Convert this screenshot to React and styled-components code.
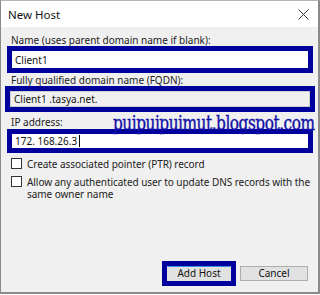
import React from "react";
import styled, { createGlobalStyle } from "styled-components";

const Global = createGlobalStyle`
  html, body { margin: 0; padding: 0; background: #ffffff; }
  body { font-family: "Noto Sans", "Liberation Sans", sans-serif; }
  * { box-sizing: border-box; }
`;

const NAVY = "#00009c";

const Window = styled.div`
  position: relative;
  width: 320px;
  height: 294px;
  display: flex;
  flex-direction: column;
  border-top: 1px solid #b4b4b4;
  border-left: 1px solid #8a8a8a;
  border-right: 2px solid #8a8a8a;
  border-bottom: 2px solid #8a8a8a;
  background: #f0f0f0;
  color: #1a1a1a;
`;

const TitleBar = styled.div`
  height: 26px;
  flex: none;
  display: flex;
  align-items: center;
  justify-content: space-between;
  background: #ffffff;
  padding: 0 9px 0 7px;
  font-size: 11.5px;
  color: #111;
`;

const Close = styled.svg`
  width: 11px;
  height: 11px;
  display: block;
`;

const Content = styled.div`
  flex: 1;
  display: flex;
  flex-direction: column;
  padding: 7px 5px 0 6px;
`;

const Label = styled.div`
  font-size: 10px;
  line-height: 12px;
  height: ${(p) => p.$h || 12}px;
  margin-top: ${(p) => p.$mt || 0}px;
  padding-left: 4px;
  color: #222;
  white-space: nowrap;
`;

const Highlight = styled.div`
  border: 5px solid ${NAVY};
  height: ${(p) => p.$h}px;
  margin: ${(p) => p.$m || "0"};
  display: flex;
`;

const Field = styled.div`
  flex: 1;
  display: flex;
  align-items: center;
  padding-left: 3px;
  font-size: 10px;
  color: #111;
  background: ${(p) => (p.$disabled ? "#f0f0f0" : "#ffffff")};
  border: ${(p) => (p.$disabled ? "1px solid #cfcfcf" : "none")};
  white-space: nowrap;
`;

const Caret = styled.span`
  display: inline-block;
  width: 1px;
  height: 12px;
  background: #000;
  margin-left: 2px;
`;

const Checks = styled.div`
  display: flex;
  flex-direction: column;
  gap: 6px;
  margin-top: 5px;
  padding-left: 4px;
`;

const CheckRow = styled.label`
  display: flex;
  align-items: flex-start;
  gap: 5px;
  font-size: 10px;
  line-height: 12px;
  color: #222;
  white-space: nowrap;
  letter-spacing: -0.05px;
`;

const Box = styled.span`
  flex: none;
  width: 11px;
  height: 11px;
  border: 1px solid #333;
  background: #fff;
`;

const Buttons = styled.div`
  margin-top: auto;
  margin-bottom: 6px;
  display: flex;
  justify-content: flex-end;
  align-items: center;
  gap: 4px;
  padding-right: 5px;
`;

const DefaultRing = styled.div`
  border: 5px solid ${NAVY};
  width: 74px;
  height: 25px;
  display: flex;
`;

const Button = styled.button`
  width: ${(p) => p.$w}px;
  height: 15px;
  padding: 0;
  font-family: inherit;
  font-size: 10px;
  line-height: 13px;
  color: #111;
  background: #e1e1e1;
  border: 1px solid ${(p) => (p.$default ? "#e1e1e1" : "#adadad")};
  border-top-color: ${(p) => (p.$default ? "#3d8fe0" : "#adadad")};
  flex: ${(p) => (p.$default ? 1 : "none")};
`;

const Watermark = styled.div`
  position: absolute;
  left: 112px;
  top: 112px;
  font-family: "DejaVu Serif", "Liberation Serif", serif;
  font-stretch: condensed;
  font-size: 17px;
  line-height: 18px;
  color: #1010a8;
  letter-spacing: -0.45px;
  white-space: nowrap;
  transform: scaleY(1.15);
  transform-origin: 0 0;
  -webkit-text-stroke: 0.3px #1010a8;
`;

export default function App() {
  return (
    <>
      <Global />
      <Window>
        <TitleBar>
          <span>New Host</span>
          <Close viewBox="0 0 11 11">
            <path d="M0.5 0.5 L10.5 10.5 M10.5 0.5 L0.5 10.5" stroke="#333" strokeWidth="1" fill="none" />
          </Close>
        </TitleBar>
        <Content>
          <Label $h={12}>Name (uses parent domain name if blank):</Label>
          <Highlight $h={27}>
            <Field>Client1</Field>
          </Highlight>
          <Label $h={13} $mt={1}>Fully qualified domain name (FQDN):</Label>
          <Highlight $h={26} $m="-1px -2px 0 -2px">
            <Field $disabled>Client1 .tasya.net.</Field>
          </Highlight>
          <Label $h={13} $mt={4}>IP address:</Label>
          <Highlight $h={24}>
            <Field>
              172. 168.26.3
              <Caret />
            </Field>
          </Highlight>
          <Checks>
            <CheckRow>
              <Box />
              <span>Create associated pointer (PTR) record</span>
            </CheckRow>
            <CheckRow>
              <Box />
              <span>
                Allow any authenticated user to update DNS records with the
                <br />
                same owner name
              </span>
            </CheckRow>
          </Checks>
          <Buttons>
            <DefaultRing>
              <Button $default $w={64}>Add Host</Button>
            </DefaultRing>
            <Button $w={68}>Cancel</Button>
          </Buttons>
        </Content>
        <Watermark>puipuipuimut.blogspot.com</Watermark>
      </Window>
    </>
  );
}
